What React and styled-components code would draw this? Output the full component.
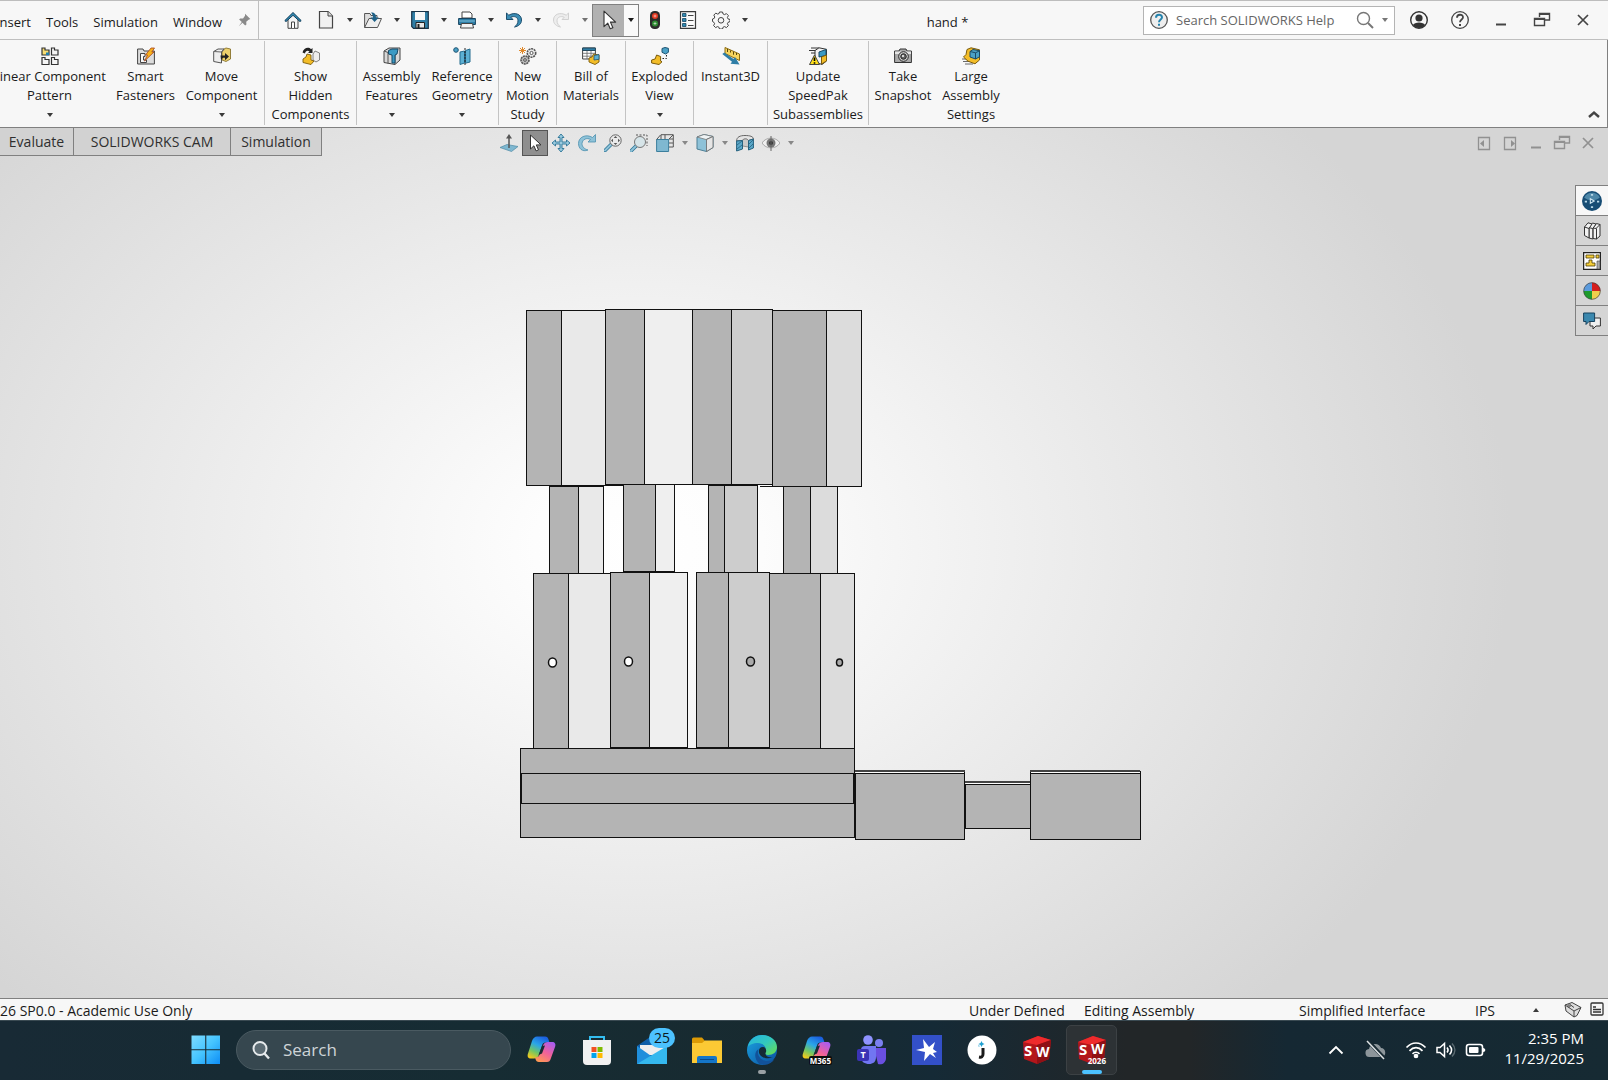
import { useState } from "react"
import styled, { createGlobalStyle } from "styled-components"

const ribbonGroups = [
    [
        { lines: ["Linear Component", "Pattern"], icon: "pattern", width: 115, menu: true },
        { lines: ["Smart", "Fasteners"], icon: "fasteners", width: 77 },
        { lines: ["Move", "Component"], icon: "move", width: 75, menu: true },
    ],
    [{ lines: ["Show", "Hidden", "Components"], icon: "hidden", width: 91 }],
    [
        { lines: ["Assembly", "Features"], icon: "features", width: 69, menu: true },
        { lines: ["Reference", "Geometry"], icon: "geometry", width: 72, menu: true },
    ],
    [{ lines: ["New", "Motion", "Study"], icon: "motion", width: 57 }],
    [{ lines: ["Bill of", "Materials"], icon: "bill", width: 68 }],
    [{ lines: ["Exploded", "View"], icon: "exploded", width: 67, menu: true }],
    [{ lines: ["Instant3D"], icon: "instant", width: 73 }],
    [{ lines: ["Update", "SpeedPak", "Subassemblies"], icon: "speedpak", width: 100 }],
    [
        { lines: ["Take", "Snapshot"], icon: "camera", width: 68 },
        { lines: ["Large", "Assembly", "Settings"], icon: "large", width: 68 },
    ],
]

// every drawing is on an 18 x 18 grid
const icons = {
    pin: <g fill="#8a8a8a"><path d="M9 2l6 6-2 .6-2.6 2.4.2 3.2-1.4 1-3-3L2 16l3.4-4.8-3-2.8 1.2-1.2 3.2.2L9 4.2z" /></g>,
    home: <g><path d="M4 8v9.300h10V8L9 3z" fill="#f4f4f4" stroke="#444" /><path d="M7.500 17v-6h3v6" fill="#fff" stroke="#444" /><path d="M.8 9.600L9 1.500l8.200 8.100-1.200 1L9 4.300l-7 6.300z" fill="#2f8bb3" stroke="#143d5a" /></g>,
    doc: <g><path d="M2.500.500h8.500l4.500 4.500v12h-13z" fill="#f1f1f1" stroke="#444" strokeWidth="1.200" /><path d="M11 .500V5h4.500" fill="#ddd" stroke="#444" /></g>,
    open: <g><path d="M.600 16.500V2.500H6l1 2h6v3" fill="#ddd" stroke="#555" /><path d="M.600 16.500L5 7.500h12.500L13.500 16.500z" fill="#eee" stroke="#555" /><path d="M7 1.500c4 0 5 2 5 5h2.800L10.600 11 6.500 6.500H9c0-2-.5-3-2-5z" fill="#1f6288" /></g>,
    save: <g><path d="M.700.700h16.600v16.600H2.500L.700 15.500z" fill="#2f7ea6" stroke="#1b3448" strokeWidth="1.200" /><path d="M4 1h10v8H4z" fill="#f7f7f7" /><path d="M5 11.500h8.500V17H5z" fill="#e8e8e8" stroke="#222" /><path d="M6.500 13h2v4h-2z" fill="#222" /></g>,
    print: <g><path d="M4 7V1h8l2 2v4z" fill="#fff" stroke="#444" /><path d="M.600 7.500h16.800v6H.600z" fill="#2f7ea6" stroke="#174460" /><path d="M1 10h16" stroke="#7ec0dc" /><path d="M3.500 12.500h11l1 4.500h-13z" fill="#f4f4f4" stroke="#444" /></g>,
    undo: <path d="M1.500 2v6.500H8L5.800 6.300C9 4.600 13 6 13 9.800c0 2.700-1.500 4.500-3.500 6.200 4-.8 7-3 7-7C16.500 3 9.500.800 3.800 4.200z" fill="#3b8db5" stroke="#1d4e6d" strokeLinejoin="round" />,
    redo: <path d="M16.500 2v6.500H10l2.200-2.200C9 4.600 5 6 5 9.800c0 2.700 1.500 4.500 3.500 6.200-4-.8-7-3-7-7C1.500 3 8.500.800 14.200 4.200z" fill="#e9e9e9" stroke="#c2c2c2" strokeLinejoin="round" />,
    cursor: <path d="M4.500 1v14l3.400-3.200 2.200 5.100 2.400-1-2.200-5H15z" fill="#fff" stroke="#333" strokeLinejoin="round" />,
    traffic: <g><rect x="4" y="0" width="10" height="18" rx="4.500" fill="#2b2b2b" /><circle cx="9" cy="5" r="3" fill="#e33a22" /><circle cx="9" cy="12.500" r="3" fill="#2f8d32" /><path d="M9 3.500v3M7.500 5h3M9 11v3M7.500 12.500h3" stroke="#fff" strokeOpacity=".5" /></g>,
    list: <g><path d="M1.500.600h15v16.800h-15z" fill="#fafafa" stroke="#3b3b3b" strokeWidth="1.200" /><path d="M3.500 2.500H7v3H3.500zM3.500 7.500H7v3H3.500zM3.500 12.500H7v3H3.500z" fill="#2f8bb3" stroke="#17425e" strokeWidth=".8" /><path d="M9 4.500h5.500M9 9.500h5.500M9 14.500h5.500" stroke="#444" /></g>,
    gear: <g fill="none" stroke="#444" strokeLinejoin="round"><path d="M7.500 1h3l.6 2 1.400.6 1.900-1 2 2-1 1.900.6 1.400 2 .6v2l-2 .9-.6 1.300 1 1.900-2 2-1.900-1-1.400.6-.6 1.800h-3l-.6-1.800-1.400-.6-1.900 1-2-2 1-1.900L2 11.400l-1.500-.9V8l1.700-.6.600-1.400-1-1.900 2-2 1.900 1 1.400-.6z" /><circle cx="9" cy="9.300" r="2.800" /></g>,

    pattern: <g fill="#f5f5f5" stroke="#333" strokeWidth="1.200"><path d="M1 1h3v2h4v5H1z" fill="#f8de73" /><path d="M5 5.500h3V8H5z" fill="#1f7fb0" stroke="none" /><path d="M10.500 1h3v2h3.500v5h-6.500zM1 10.500h3v2h4v5H1zM10.500 10.500h3v2h3.500v5h-6.500z" /></g>,
    fasteners: <g><path d="M.600 17V2H6l1 2h10.400v13z" fill="#dcdcdc" stroke="#444" /><path d="M3.500 6.500h4.500v3H6.500V13h3v2.500h-6z" fill="#f7f7f7" stroke="#444" /><path d="M14 1h3.500l-2.700 4H17l-9.500 9 3-6H8.500z" fill="#f6b21b" stroke="#a8441d" strokeWidth=".8" /></g>,
    move: <g><path d="M9 3l4-2 4.500 1v10L13 14.500 9 13z" fill="#ecd06c" stroke="#7b641c" strokeWidth=".8" /><path d="M.700 4.500L5 2h6l-2.500 3v11L.700 14.500z" fill="#eee" stroke="#555" /><path d="M.700 4.500L8.500 5M8.500 5L11 2.500" fill="none" stroke="#666" /><path d="M7.500 8.500h4.500V6l4 3.600-4 3.700v-2.500h-2l-2 2z" fill="#222" /></g>,
    hidden: <g><path d="M.500 5.500c1-4.500 6-6 8.500-3.300L10.500 1v5H6l1.500-1.500C5.500 3 3.500 4 3 6.500z" fill="#222" /><path d="M11 7l2-3 4.500 2v7L14 15l-3-2z" fill="#eee" stroke="#666" strokeWidth=".8" /><path d="M1 12l3-2 1-3 4 1v5l3 1-3 3.500-8-2z" fill="#f3bd28" stroke="#7b5b0c" strokeWidth=".9" /></g>,
    features: <g><path d="M1 4l5-3h11v12l-5 4.500-11-2z" fill="#d8d8d8" stroke="#444" /><path d="M1 4l4 1.500v11M12 17V6" fill="none" stroke="#555" /><path d="M5.500 3.500L9 2h6l-1 5-2 1v8H9V8L5.500 7z" fill="#3b9ac4" stroke="#174a68" /></g>,
    geometry: <g><circle cx="3" cy="3" r="2.300" fill="#4ba1c6" stroke="#1e5473" /><path d="M7 5l4.500-1v12L7 17.500zM12.500 3.500L17 2v13l-4.500 1.200z" fill="#5cb0d3" stroke="#256c8f" /><path d="M12 1v17" stroke="#222" strokeDasharray="2 1" /></g>,
    motion: <g><path d="M3.500 0v7M0 3.500h7M1 1l5 5M6 1L1 6" stroke="#e0892b" /><circle cx="12.500" cy="6" r="4.200" fill="#eee" stroke="#555" strokeWidth="1.600" strokeDasharray="2 .7" /><circle cx="12.500" cy="6" r="1.600" fill="#fff" stroke="#555" /><circle cx="6" cy="13" r="4" fill="#bbb" stroke="#555" strokeWidth="1.600" strokeDasharray="2 .7" /><circle cx="6" cy="13" r="1.300" fill="#fff" stroke="#444" /></g>,
    bill: <g><path d="M.600 1h12.800v11H.600z" fill="#fff" stroke="#444" /><path d="M.600 1h12.800v2.500H.600z" fill="#2f7ea6" stroke="#264a5e" /><path d="M1 6.300h12M1 9.200h12M5 4v8M9 4v8" stroke="#666" strokeWidth=".8" /><path d="M7 11l3-1 1.500-3 5.500 1v7l-4 2.500-6-2.500z" fill="#f3bd28" stroke="#7b5b0c" strokeWidth=".9" /><path d="M12 8.500L17 7.500v4.800l-5 .7z" fill="#5cb0d3" stroke="#1e5473" strokeWidth=".8" /></g>,
    exploded: <g><path d="M11 1.500l3-1 3.400.8v4L14.500 7 11 5.300z" fill="#4ba1c6" stroke="#1e5473" /><path d="M15.500 8v3.500h-5" fill="none" stroke="#222" strokeDasharray="1.500 1.500" /><path d="M.600 13l3.500-1 1.500-4 4 1.500V14l1.400.8L8 17.500.600 16z" fill="#f3bd28" stroke="#7b5b0c" /></g>,
    instant: <g><path d="M3 .500L17.500 7v6.500L3 6.500z" fill="#f6d55f" stroke="#8a6a10" /><path d="M5.500 2v3M8.500 3.500v2M11.500 4.700v3M14.500 6v2" stroke="#5a4608" /><path d="M.300 7l2-1.500 9.200 6.500 1.500-2 4.500 7.500-9-.7 1.500-2z" fill="#2f7ea6" /></g>,
    speedpak: <g><path d="M2 1h8M0 3.500h7M2 6h4" stroke="#333" /><path d="M6 3.500L10 .800l7.500 1.500V14L13 17.500 6 15z" fill="#f2f2f2" stroke="#333" /><path d="M10 5l7-2.500v6L10 10z" fill="#3b9ac4" stroke="#1b4b66" /><path d="M12.500 10l5-2v6L12.500 17z" fill="#f3bd28" stroke="#7b5b0c" /><path d="M5.500 8l5 9.500H.500z" fill="#ffe01b" stroke="#444" /><path d="M5.500 10.500v3.500M5.500 15.200v1.500" stroke="#000" strokeWidth="1.600" /></g>,
    camera: <g><path d="M.600 4H5l1-2h6l1 2h4.400v11.500H.600z" fill="#aaa" stroke="#333" /><path d="M1 4.500h16V7H1z" fill="#e5e5e5" /><circle cx="9.500" cy="9.500" r="4.800" fill="#ddd" stroke="#222" /><circle cx="9.500" cy="9.500" r="2.800" fill="#666" stroke="#222" /><circle cx="9" cy="9" r="1" fill="#fff" /></g>,
    large: <g><path d="M0 12h6M1 14.500h7M3 17h8" stroke="#444" strokeWidth=".8" /><path d="M1.500 10L4 7.500l1-5L9 .800l8.500 2V13L13 16.800l-7-2.600z" fill="#f3bd28" stroke="#7b5b0c" /><path d="M8 4.500L11 2.500l6.500 1.300v6L13.500 12 8 10z" fill="#4ba1c6" stroke="#1b4b66" /><path d="M8 4.500l5.500 1.300V12M13.500 5.800l4-2" fill="none" stroke="#1b4b66" /></g>,

    normal: <g><path d="M0 13.500l7-3 11 2-6.500 5z" fill="#7fb8d1" stroke="#4d8aa5" strokeWidth=".7" /><path d="M9 14V2" stroke="#555" strokeWidth="1.500" /><path d="M9 0l3 4.500H6z" fill="#555" /></g>,
    pan: <path d="M9 0l3 3.500h-2v4.500h4.500V6L18 9l-3.500 3v-2H10v4.500h2L9 18l-3-3.500h2V10H3.500v2L0 9l3.500-3v2H8V3.500H6z" fill="#9bcbdf" stroke="#2b7496" strokeWidth=".9" />,
    rotate: <path d="M17.500.500v7.500h-7.500l2.500-2.500C9 3.500 4.500 5 4 9.500c0 3.500 2.500 5.500 6 6.500C4 18.500.500 14 .500 9.500.500 3 8-.500 14.500 3.500z" fill="#8ec2d8" stroke="#4c90ae" strokeWidth=".8" />,
    zoomFit: <g><path d="M1 16.500l6-6" stroke="#2b7496" strokeWidth="3.500" strokeLinecap="round" /><path d="M1 16.500l6-6" stroke="#8ec2d8" strokeWidth="2" strokeLinecap="round" /><circle cx="11.500" cy="6.500" r="5.700" fill="#eaeaea" stroke="#666" /><path d="M11.500 2l1.800 2h-3.600zM11.500 11l1.800-2h-3.600zM7 6.500l2-1.800v3.600zM16 6.500l-2-1.800v3.600z" fill="#555" /></g>,
    zoomArea: <g><path d="M6 1h11v11" fill="none" stroke="#555" strokeDasharray="2 1.500" /><path d="M1 17l5-5" stroke="#2b7496" strokeWidth="3.500" strokeLinecap="round" /><path d="M1 17l5-5" stroke="#8ec2d8" strokeWidth="2" strokeLinecap="round" /><circle cx="10" cy="8" r="5.500" fill="#d6e4e8" stroke="#777" /></g>,
    orient: <g><path d="M5 5V.700h12.300V13H13M17 1l-4.500 4.500M9 .700v4.500M13 5h4M17 9h-4" fill="none" stroke="#555" /><path d="M.600 5.500h12v12H.600z" fill="#7fb8d1" stroke="#3c7f9d" /><path d="M.600 5.500L4.500 1" stroke="#555" /></g>,
    display: <g><path d="M1 3l7-2.500 9 2v11L10.500 17.500 1 15z" fill="#8ec2d8" stroke="#4d7f95" /><path d="M1 3l9 2.500 7-3-9-2z" fill="#eef3f5" stroke="#777" strokeWidth=".8" /><path d="M10.500 5.500l6.500-3v11l-6.500 4z" fill="#e6e6e6" stroke="#666" strokeWidth=".8" /></g>,
    section: <g><path d="M.600 7C.600 3 4 1.500 9 1.500s8.400 1 8.400 3.500l-4.900 1.500c-1-2-5-2-6.500 0z" fill="#e4e4e4" stroke="#666" /><path d="M6.500 6.500c1.500-2 4.500-2 6 0V13l-6-1z" fill="#c9c9c9" stroke="#777" strokeWidth=".7" /><path d="M.600 7l5.900-.5V15L.600 17zM12.500 6.500l4.900-1.500v9l-4.900 2z" fill="#5ba8c9" stroke="#24607e" /><path d="M1 11l5-4M1 15l5-4M13 10l4-4M13 14l4-4" stroke="#24607e" strokeWidth=".8" /></g>,
    eye: <g><path d="M0 9c4-6.500 14-6.500 18 0-4 6.500-14 6.500-18 0z" fill="#f0f0f0" stroke="#999" strokeWidth=".8" /><circle cx="9" cy="9" r="4.500" fill="#777" /><circle cx="9" cy="9" r="2" fill="#333" /><path d="M9 2v15" stroke="#666" /></g>,

    minimize: <path d="M4 13.500h10" stroke="currentColor" strokeWidth="2" />,
    restore: <g fill="none" stroke="currentColor" strokeWidth="1.400"><path d="M6.500 6V2.500h10V9H12" /><path d="M6.500 3h10M1.500 8h10" strokeWidth="2" /><path d="M1.500 7.500h10v7h-10z" /></g>,
    close: <path d="M4 4l10 10M14 4L4 14" stroke="currentColor" strokeWidth="1.700" />,
    paneLeft: <g><path d="M3.500 3.500h11v12h-11z" fill="none" stroke="currentColor" strokeWidth="1.300" /><path d="M9 6v7L5 9.500z" fill="currentColor" /></g>,
    paneRight: <g><path d="M3.500 3.500h11v12h-11z" fill="none" stroke="currentColor" strokeWidth="1.300" /><path d="M10 6v7l4-3.500z" fill="currentColor" /></g>,
    user: <g><circle cx="9" cy="9" r="8.300" fill="#f7f7f7" stroke="#333" strokeWidth="1.400" /><circle cx="9" cy="7" r="3.600" fill="#333" /><path d="M3 14c1-3.500 11-3.500 12 0-3 4-9 4-12 0z" fill="#333" /></g>,
    help: <g><circle cx="9" cy="9" r="8.300" fill="none" stroke="#444" strokeWidth="1.300" /><path d="M6 6.800c0-4 6-4 6-.5 0 2.200-3 2.200-3 5" fill="none" stroke="#444" strokeWidth="1.800" /><path d="M8 13h2v2H8z" fill="#444" /></g>,
    helpBlue: <g><circle cx="9" cy="9" r="8.300" fill="#eee" stroke="#555" strokeWidth="1.300" /><path d="M6 6.800c0-4 6-4 6-.5 0 2.200-3 2.200-3 5" fill="none" stroke="#2583ad" strokeWidth="2" /><path d="M8 12.800h2v2H8z" fill="#2583ad" /></g>,
    search: <g fill="none" stroke="#777" strokeWidth="1.400"><circle cx="7.500" cy="7.500" r="6" /><path d="M12 12l5 5" strokeWidth="2" /></g>,
    collapse: <path d="M4 12l5-4.500 5 4.500" fill="none" stroke="#444" strokeWidth="2.400" />,

    ball: <g><circle cx="9" cy="9" r="9" fill="#164c74" /><path d="M2 6C4 0 14 0 16 6c-4 3-10 3-14 0z" fill="#4d87a8" /><path d="M7.500 7l3.500 2-3.500 2z" fill="none" stroke="#cde4f0" /><path d="M2.500 9.500h2M13.500 9.500h2M8 14.500h2M8 3.500h2" stroke="#b6d6e6" strokeWidth="1.500" /></g>,
    books: <g fill="#f2f2f2" stroke="#333" strokeLinejoin="round"><path d="M10 6l3.500-4.500 3.500 1V14l-3.500 3-3.500-.5z" /><path d="M13.500 6L17 2.500M10 6l3.500.5V17" fill="none" /><path d="M6 5.500L9.500 1l3.500 1L9.800 6.500V17L6 16z" /><path d="M1.500 5L5 .800l4 1.200L6 6.500V16l-4.500-2.500z" /><path d="M1.500 5L6 6.500M6 5.700l3.800.8" fill="none" /></g>,
    palette: <g><path d="M.600.600h16.800v16.800H.600z" fill="#fff" stroke="#222" strokeWidth="1.300" /><path d="M3 3h8v3H3zM13 3h3v3h-3zM6 8h3v3h3v3H3v-3h3z" fill="#f6cf3a" stroke="#4a3a05" strokeWidth=".8" /><path d="M14 9h3v8h-3z" fill="#aaa" stroke="#444" strokeWidth=".6" /></g>,
    colors: <g><path d="M9 9V.500A8.500 8.500 0 0 0 .500 9z" fill="#5b9bdd" /><path d="M9 9V.500A8.500 8.500 0 0 1 17.500 9z" fill="#d51f1f" /><path d="M9 9H.500A8.500 8.500 0 0 0 9 17.500z" fill="#1e9a2c" /><path d="M9 9h8.500A8.500 8.500 0 0 1 9 17.500z" fill="#f0cf4c" /><circle cx="9" cy="9" r="8.300" fill="none" stroke="#444" strokeOpacity=".7" /></g>,
    chat: <g><path d="M7 6h10.400v8H13l-3 3v-3H7z" fill="#f0f0f0" stroke="#333" /><path d="M.600 1h11v8.500H6l-3 3v-3H.600z" fill="#3b88ae" stroke="#17425e" /></g>,
    tags: <g><path d="M1 4l7-2.500 9 5-4 8-3 1.500-8-6z" fill="#ddd" stroke="#444" /><path d="M1 4l9 6 7-3.500M10 10v6M6 3.500l4 3" fill="none" stroke="#444" /><circle cx="5" cy="5" r="1.200" fill="#fff" stroke="#444" /></g>,
    note: <g fill="none" stroke="#333" strokeWidth="1.300"><rect x="3" y="2" width="12" height="12" rx="1" /><path d="M5 6h3M5 8.500h8M5 11h8" /></g>,
}

const copilotBody = (
    <g>
        <path d="M10 1.500h8c2 0 3 1 3.500 3l1 3h-4c-2 0-3 1-3.500 3l-3 9c-1 3-3 4-5 4H4c-3 0-4-2-3-5L5 6c1-3 3-4.500 5-4.500z" fill="url(#copilotCool)" />
        <path d="M20 27h-8c-2 0-3-1-3.500-3l-.500-1.500c2.500 0 4-1 5-4l3-8c1-3 3-3.500 5-3.500h4c3 0 4 2 3 5l-4 11c-1 3-2 4-4 4z" fill="url(#copilotWarm)" />
        <path d="M15 11l3-.500-3 8-3.500 1.500z" fill="#1b2b34" />
    </g>
)

const cube = (
    <g>
        <path d="M1 7L16 1l13 4-2 19-12 5L2 24z" fill="#b3161b" />
        <path d="M1 7L16 1l13 4-14 5z" fill="#ee2a2c" />
        <path d="M15 10l14-5-2 19-12 5z" fill="#8f1015" />
    </g>
)

// taskbar pictures are on a 30 x 30 grid
const apps = [
    { name: "Copilot", art: copilotBody },
    {
        name: "Microsoft Store",
        art: <g><path d="M8 7V2h14v5" fill="none" stroke="#33bdf0" strokeWidth="2" /><path d="M1 5h28v21a4 4 0 0 1-4 4H5a4 4 0 0 1-4-4z" fill="#f1f1f1" /><path d="M9.500 12h5v5h-5z" fill="#f25022" /><path d="M15.500 12h5v5h-5z" fill="#7fba00" /><path d="M9.500 18h5v5h-5z" fill="#00a4ef" /><path d="M15.500 18h5v5h-5z" fill="#ffb900" /></g>,
    },
    {
        name: "Mail",
        badge: "25",
        art: <g><path d="M0 11L13 2l17 9v18H0z" fill="#0f5ea8" /><path d="M3 10h24v10H3z" fill="#eee" /><path d="M0 11l17 12L0 29z" fill="#1f8fdc" /><path d="M30 11L0 29h30z" fill="#35b8ee" /></g>,
    },
    {
        name: "File Explorer",
        art: <g><path d="M0 4a1.500 1.500 0 0 1 1.500-1.500H10L13 6v6H0z" fill="#dc9a05" /><path d="M0 8h10l3-2.500h17V28H0z" fill="#fcc934" /><path d="M5 28v-5a2 2 0 0 1 2-2h16a2 2 0 0 1 2 2v5z" fill="#1576c8" /><path d="M8 24.500h14" stroke="#0a4a8a" /></g>,
    },
    {
        name: "Edge",
        running: true,
        art: <g><circle cx="15" cy="15" r="15" fill="url(#edgeBlue)" /><path d="M1 12C2 4 9 0 15 0c9 0 15 6 15 12 0 5-4 8-9 8-3 0-4-2-2.500-4C20 12 16 8 11 8 6 8 2 10 1 12z" fill="url(#edgeGreen)" /><path d="M11.500 14c-2 6 2 12 9 12 3 0 6-1 7-2-3 5-9 7-15 5-5-4-6-12-1-15z" fill="#12529a" /><path d="M16 12c-4 0-5 4-3.500 7 2 4 8 5.500 13.500 3-4 1-8-1-7.500-4 1.500-2 .5-6-2.500-6z" fill="#152a35" /></g>,
    },
    { name: "Microsoft 365 Copilot", tag: "M365", art: copilotBody },
    {
        name: "Teams",
        art: <g><circle cx="22" cy="8" r="4" fill="#7b7ff0" /><path d="M17 13h12v10a6 6 0 0 1-8 6z" fill="#6a4fe0" /><circle cx="11" cy="5" r="4.800" fill="#8f93ff" /><path d="M4 15a4 4 0 0 1 4-4h11v11c0 5-3 7-7 7s-8-2-8-7z" fill="#7176f2" /><rect x="0" y="14" width="12" height="12" rx="2" fill="#3a33b5" /><text x="6" y="23" textAnchor="middle" fontSize="9" fontWeight="700" fill="#fff">T</text></g>,
    },
    {
        name: "Pointer",
        art: <g><path d="M0 0h30v30H0z" fill="#3350c8" /><path d="M11 4l6 8 6-5-2 7 4 3-4 1 3 5-6-4-6 7 1-9-9-2 8-2z" fill="#fff" /></g>,
    },
    {
        name: "Notes",
        art: <g><circle cx="15" cy="15" r="14.500" fill="#fff" /><path d="M14.500 6l1 2 2 1-2 1-1 2-1-2-2-1 2-1zM11 9l.700 1.500L13 11l-1.300.700" fill="#1f9fd0" /><path d="M16 13v6c0 3-1.500 3.500-4 3" fill="none" stroke="#1b1b1b" strokeWidth="3" /></g>,
    },
    {
        name: "SOLIDWORKS",
        art: <g>{cube}<text x="2" y="21" fontSize="15" fontWeight="700" fill="#fff">S</text><text x="14" y="22" fontSize="14" fontWeight="700" fill="#fff">W</text></g>,
    },
    {
        name: "SOLIDWORKS 2026",
        active: true,
        tag: "2026",
        plain: true,
        art: <g>{cube}<text x="2" y="20" fontSize="15" fontWeight="700" fill="#fff">S</text><text x="14" y="19" fontSize="14" fontWeight="700" fill="#fff">W</text></g>,
    },
]

// x, y, width, height, shade
const fingers = [
    [549, 486, 29, 87, "#b4b4b4"], [578, 486, 25, 87, "#e9e9e9"],
    [623, 484, 32, 87, "#b4b4b4"], [655, 484, 19, 87, "#efefef"],
    [708, 485, 16, 87, "#b4b4b4"], [724, 485, 33, 87, "#cdcdcd"],
    [783, 486, 27, 87, "#b4b4b4"], [810, 486, 27, 87, "#dcdcdc"],
    [526, 310, 35, 175, "#b4b4b4"], [561, 310, 44, 175, "#e9e9e9"],
    [772, 310, 54, 176, "#b4b4b4"], [826, 310, 35, 176, "#dcdcdc"],
    [605, 309, 39, 175, "#b4b4b4"], [644, 309, 48, 175, "#efefef"],
    [692, 309, 39, 175, "#b4b4b4"], [731, 309, 41, 175, "#cdcdcd"],
    [533, 573, 35, 175, "#b4b4b4"], [568, 573, 42, 175, "#e9e9e9"],
    [769, 573, 51, 175, "#b4b4b4"], [820, 573, 34, 175, "#dcdcdc"],
    [610, 572, 39, 175, "#b4b4b4"], [649, 572, 38, 175, "#efefef"],
    [696, 572, 32, 175, "#b4b4b4"], [728, 572, 41, 175, "#cdcdcd"],
]

const palm = [
    [520, 748, 334, 89, "#b4b4b4"],
    [521, 773, 332, 30, "#b4b4b4"],
    [855, 773, 109, 66, "#b4b4b4"],
    [965, 784, 65, 44, "#b4b4b4"],
    [1030, 773, 110, 66, "#b4b4b4"],
]

const holes = [
    [552, 662, 4, "#fff"],
    [628, 661, 4, "#fff"],
    [750, 661, 4, "#aaa"],
    [839, 662, 3, "#aaa"],
]

function Icon({ name, size = 18 }) {
    return <svg width={size} height={size} viewBox="0 0 18 18" fill="none" aria-hidden="true">{icons[name]}</svg>
}

function Caret({ up }) {
    return (
        <svg width="6" height="4" viewBox="0 0 6 4" aria-hidden="true">
            <path d={up ? "M0 4h6L3 0z" : "M0 0h6L3 4z"} fill="currentColor" />
        </svg>
    )
}

function SplitTool({ icon, label }) {
    return (
        <Split>
            <IconButton aria-label={label}><Icon name={icon} /></IconButton>
            <CaretButton aria-label={label + " options"}><Caret /></CaretButton>
        </Split>
    )
}

function TitleBar() {
    const [query, setQuery] = useState("")

    return (
        <TitleRow>
            <MenuBar>
                <MenuButton>Insert</MenuButton>
                <MenuButton>Tools</MenuButton>
                <MenuButton>Simulation</MenuButton>
                <MenuButton>Window</MenuButton>
                <IconButton aria-label="Pin menu"><Icon name="pin" size={16} /></IconButton>
            </MenuBar>
            <QuickTools>
                <HomeButton aria-label="Home"><Icon name="home" /></HomeButton>
                <SplitTool icon="doc" label="New" />
                <SplitTool icon="open" label="Open" />
                <SplitTool icon="save" label="Save" />
                <SplitTool icon="print" label="Print" />
                <SplitTool icon="undo" label="Undo" />
                <Faded><SplitTool icon="redo" label="Redo" /></Faded>
                <SelectTool>
                    <SelectButton aria-label="Select"><Icon name="cursor" size={20} /></SelectButton>
                    <SelectCaret aria-label="Select options"><Caret /></SelectCaret>
                </SelectTool>
            </QuickTools>
            <SideTools>
                <IconButton aria-label="Rebuild"><Icon name="traffic" /></IconButton>
                <IconButton aria-label="File properties"><Icon name="list" /></IconButton>
                <SplitTool icon="gear" label="Options" />
            </SideTools>
            <DocumentName>hand *</DocumentName>
            <HelpSearch>
                <Icon name="helpBlue" />
                <HelpInput aria-label="Search help" placeholder="Search SOLIDWORKS Help" value={query} onChange={e => setQuery(e.target.value)} />
                <Icon name="search" />
                <Caret />
            </HelpSearch>
            <WindowButtons>
                <WindowButton aria-label="Account"><Icon name="user" /></WindowButton>
                <WindowButton aria-label="Help"><Icon name="help" /></WindowButton>
                <WindowButton aria-label="Minimize"><Icon name="minimize" /></WindowButton>
                <WindowButton aria-label="Restore"><Icon name="restore" /></WindowButton>
                <WindowButton aria-label="Close"><Icon name="close" /></WindowButton>
            </WindowButtons>
        </TitleRow>
    )
}

function Ribbon() {
    return (
        <RibbonRow>
            {ribbonGroups.map((group, index) => (
                <RibbonGroup key={index}>
                    {group.map(item => (
                        <RibbonButton key={item.icon} $width={item.width}>
                            <Icon name={item.icon} />
                            <RibbonText>
                                {item.lines.map(line => <RibbonLine key={line}>{line}</RibbonLine>)}
                            </RibbonText>
                            {item.menu && <RibbonCaret><Caret /></RibbonCaret>}
                        </RibbonButton>
                    ))}
                </RibbonGroup>
            ))}
            <CollapseButton aria-label="Collapse ribbon"><Icon name="collapse" /></CollapseButton>
        </RibbonRow>
    )
}

function Model() {
    return (
        <ModelDrawing viewBox="0 128 1608 870" preserveAspectRatio="xMidYMid meet" aria-label="Hand assembly" role="img">
            <g stroke="#111" shapeRendering="crispEdges">
                {fingers.map(([x, y, w, h, fill]) => <rect key={x + "-" + y} x={x + 0.5} y={y + 0.5} width={w} height={h} fill={fill} />)}
                {palm.map(([x, y, w, h, fill]) => <rect key={x + "-" + y} x={x + 0.5} y={y + 0.5} width={w} height={h} fill={fill} />)}
                <path d="M603 485.500h21M760 486.500h13M964.500 770v4M1030.500 770v4M1140.500 771v3M854.500 748v90" fill="none" />
                <path d="M855 771h110M965 782h65M1030 771h110" stroke="#444" strokeWidth="2" />
                <path d="M856 772.500h108M966 783.500h64M1031 772.500h109" stroke="#fff" />
            </g>
            {holes.map(([x, y, r, fill]) => <ellipse key={x} cx={x + 0.5} cy={y + 0.5} rx={r} ry={r + 0.5} fill={fill} stroke="#111" strokeWidth="1.500" />)}
        </ModelDrawing>
    )
}

function Viewport() {
    return (
        <Canvas>
            <Model />
            <CanvasBar>
                <Tabs>
                    <Tab $width={82}>Evaluate</Tab>
                    <Tab $width={157}>SOLIDWORKS CAM</Tab>
                    <Tab $width={91}>Simulation</Tab>
                </Tabs>
                <ViewTools>
                    <ViewButton aria-label="Normal to"><Icon name="normal" /></ViewButton>
                    <ViewButton aria-label="Select" $pressed><Icon name="cursor" /></ViewButton>
                    <ViewButton aria-label="Pan"><Icon name="pan" /></ViewButton>
                    <ViewButton aria-label="Rotate"><Icon name="rotate" /></ViewButton>
                    <ViewButton aria-label="Zoom to fit"><Icon name="zoomFit" /></ViewButton>
                    <ViewButton aria-label="Zoom to area"><Icon name="zoomArea" /></ViewButton>
                    <ViewButton aria-label="View orientation"><Icon name="orient" /></ViewButton>
                    <ViewCaret aria-label="View orientation options"><Caret /></ViewCaret>
                    <ViewButton aria-label="Display style"><Icon name="display" /></ViewButton>
                    <ViewCaret aria-label="Display style options"><Caret /></ViewCaret>
                    <ViewButton aria-label="Section view"><Icon name="section" /></ViewButton>
                    <ViewButton aria-label="Hide or show items"><Icon name="eye" /></ViewButton>
                    <ViewCaret aria-label="Hide or show options"><Caret /></ViewCaret>
                </ViewTools>
                <PaneButtons>
                    <ViewButton aria-label="Previous pane"><Icon name="paneLeft" /></ViewButton>
                    <ViewButton aria-label="Next pane"><Icon name="paneRight" /></ViewButton>
                    <ViewButton aria-label="Minimize document"><Icon name="minimize" /></ViewButton>
                    <ViewButton aria-label="Restore document"><Icon name="restore" /></ViewButton>
                    <ViewButton aria-label="Close document"><Icon name="close" /></ViewButton>
                </PaneButtons>
            </CanvasBar>
            <TaskPane>
                <PaneTab aria-label="Resources" $open><Icon name="ball" size={20} /></PaneTab>
                <PaneTab aria-label="Design library"><Icon name="books" /></PaneTab>
                <PaneTab aria-label="View palette"><Icon name="palette" /></PaneTab>
                <PaneTab aria-label="Appearances"><Icon name="colors" /></PaneTab>
                <PaneTab aria-label="Forum"><Icon name="chat" /></PaneTab>
            </TaskPane>
        </Canvas>
    )
}

function StatusBar() {
    return (
        <StatusRow>
            <StatusProduct>26 SP0.0 - Academic Use Only</StatusProduct>
            <StatusField $width={115}>Under Defined</StatusField>
            <StatusField $width={215}>Editing Assembly</StatusField>
            <StatusField $width={176}>Simplified Interface</StatusField>
            <StatusField $width={53}>IPS</StatusField>
            <StatusIcons>
                <CaretButton aria-label="Unit system"><Caret up /></CaretButton>
                <StatusButtons>
                    <IconButton aria-label="Tags"><Icon name="tags" /></IconButton>
                    <IconButton aria-label="Notes"><Icon name="note" /></IconButton>
                </StatusButtons>
            </StatusIcons>
        </StatusRow>
    )
}

function Taskbar() {
    const [search, setSearch] = useState("")

    return (
        <TaskbarRow>
            <StartButton aria-label="Start">
                <svg width="30" height="30" viewBox="0 0 30 30">
                    <path d="M.500.500h13.700v13.700H.500zM15.300.500H29v13.700H15.300zM.500 15.300h13.700V29H.500zM15.300 15.300H29V29H15.300z" fill="url(#winBlue)" />
                </svg>
            </StartButton>
            <TaskSearch>
                <svg width="20" height="20" viewBox="0 0 20 20" fill="none" stroke="#e6eaec" strokeWidth="2">
                    <circle cx="9" cy="8.500" r="6.500" fill="#5b6b73" />
                    <path d="M13.500 13.500L18 18.500" strokeWidth="2.400" />
                </svg>
                <TaskInput aria-label="Search Windows" placeholder="Search" value={search} onChange={e => setSearch(e.target.value)} />
            </TaskSearch>
            {apps.map(app => (
                <AppButton key={app.name} aria-label={app.name} $active={app.active}>
                    <svg width="30" height="30" viewBox="0 0 30 30">{app.art}</svg>
                    {app.badge && <Badge>{app.badge}</Badge>}
                    {app.tag && <AppTag $plain={app.plain}>{app.tag}</AppTag>}
                    {(app.running || app.active) && <Indicator $active={app.active} />}
                </AppButton>
            ))}
            <Tray>
                <TrayButton $width={40} aria-label="Hidden icons">
                    <svg width="16" height="10" viewBox="0 0 16 10" fill="none" stroke="#fff" strokeWidth="1.800"><path d="M1.500 8.500L8 2l6.500 6.500" /></svg>
                </TrayButton>
                <TrayButton $width={40} aria-label="OneDrive">
                    <svg width="22" height="20" viewBox="0 0 22 20"><path d="M5 17a4 4 0 0 1-1-8c1-6 10-7 12-1 5 0 6 8 1 9z" fill="#8d969b" /><path d="M3 1l16 17" stroke="#182a33" strokeWidth="4" /><path d="M2 1l17 18" stroke="#dfe3e5" strokeWidth="1.500" /></svg>
                </TrayButton>
                <TrayGroup>
                    <TrayButton $width={30} aria-label="Network">
                        <svg width="22" height="18" viewBox="0 0 22 18" fill="none" stroke="#fff" strokeWidth="1.700"><path d="M1.500 6.500c5.500-6 13.500-6 19 0M4.500 9.800c4-4.200 9-4.200 13 0M7.500 12.800c2-2 5-2 7 0" /><circle cx="11" cy="15" r="1.500" fill="#fff" /></svg>
                    </TrayButton>
                    <TrayButton $width={30} aria-label="Volume">
                        <svg width="22" height="18" viewBox="0 0 22 18" fill="none" stroke="#fff" strokeWidth="1.500"><path d="M2 6.500h3L9.500 2.500v13L5 11.500H2z" /><path d="M12 6.500c1.300 1.500 1.300 3.500 0 5M14.500 4.500c2.500 2.700 2.500 6.300 0 9" /><path d="M17 2.500c3.800 4 3.800 9 0 13" stroke="#5b6a71" /></svg>
                    </TrayButton>
                    <TrayButton $width={30} aria-label="Battery">
                        <svg width="22" height="18" viewBox="0 0 22 18"><rect x="1.500" y="3.500" width="16" height="11" rx="2.500" fill="none" stroke="#fff" strokeWidth="1.600" /><rect x="4" y="6" width="9.500" height="6" rx="1" fill="#fff" /><path d="M18 7c3 0 3 4 0 4z" fill="#fff" /></svg>
                    </TrayButton>
                </TrayGroup>
                <Clock>
                    <span>2:35 PM</span>
                    <span>11/29/2025</span>
                </Clock>
            </Tray>
        </TaskbarRow>
    )
}

function Gradients() {
    return (
        <HiddenSvg aria-hidden="true">
            <defs>
                <linearGradient id="winBlue" x1="0" y1="0" x2="1" y2="1"><stop offset="0" stopColor="#7fdcff" /><stop offset=".5" stopColor="#45c4ff" /><stop offset="1" stopColor="#0d8df5" /></linearGradient>
                <linearGradient id="copilotCool" x1=".7" y1="0" x2=".2" y2="1"><stop offset="0" stopColor="#1b5fe0" /><stop offset=".4" stopColor="#2aa6e8" /><stop offset=".7" stopColor="#6fc665" /><stop offset="1" stopColor="#f3c91b" /></linearGradient>
                <linearGradient id="copilotWarm" x1=".8" y1="0" x2=".2" y2="1"><stop offset="0" stopColor="#a95cf0" /><stop offset=".5" stopColor="#f0619b" /><stop offset="1" stopColor="#ff9a52" /></linearGradient>
                <linearGradient id="edgeBlue" x1="0" y1="0" x2="1" y2="1"><stop offset="0" stopColor="#1ba4e2" /><stop offset="1" stopColor="#0b4f9e" /></linearGradient>
                <linearGradient id="edgeGreen" x1="0" y1="0" x2="1" y2="1"><stop offset="0" stopColor="#25b3e3" /><stop offset=".5" stopColor="#33c8bd" /><stop offset="1" stopColor="#6ce04a" /></linearGradient>
            </defs>
        </HiddenSvg>
    )
}

function App() {
    return (
        <Screen>
            <GlobalStyle />
            <Gradients />
            <AppWindow>
                <TitleBar />
                <Ribbon />
                <Viewport />
                <StatusBar />
            </AppWindow>
            <Taskbar />
        </Screen>
    )
}

export default App

const GlobalStyle = createGlobalStyle`
    * {
        box-sizing: border-box;
    }

    body {
        margin: 0;
        overflow: hidden;
        font-family: "Open Sans", "Noto Sans", sans-serif;
        font-size: 13px;
        color: #1a1a1a;
    }

    button, input {
        font: inherit;
        color: inherit;
        border: 0;
        padding: 0;
        background: none;
    }

    svg {
        flex-shrink: 0;
    }
`

const Screen = styled.div`
    display: flex;
    flex-direction: column;
    height: 100vh;
    overflow: hidden;
`

const HiddenSvg = styled.svg`
    position: absolute;
    width: 0;
    height: 0;
`

/* the window hangs a little over the left edge of the screen */
const AppWindow = styled.div`
    display: flex;
    flex-direction: column;
    flex: 1;
    min-height: 0;
    margin-left: -8px;
    background-color: #f7f7f7;
`

const TitleRow = styled.header`
    display: flex;
    align-items: center;
    height: 40px;
    padding-right: 5px;
    border-top: 1px solid #bdbdbd;
    border-bottom: 1px solid #bfbfbf;
`

const MenuBar = styled.nav`
    display: flex;
    align-items: center;
    justify-content: flex-end;
    gap: 15px;
    width: 267px;
    height: 38px;
    padding-right: 5px;
    border-right: 1px solid #bfbfbf;
`

const MenuButton = styled.button`
    line-height: 20px;
    padding-top: 3px;
`

const IconButton = styled.button`
    display: flex;
    align-items: center;
    justify-content: center;
`

const QuickTools = styled.div`
    display: flex;
    align-items: center;
    gap: 7px;
    padding-left: 25px;
`

const HomeButton = styled(IconButton)`
    width: 26px;
    justify-content: flex-start;
`

const Split = styled.div`
    display: flex;
    align-items: center;
    gap: 7px;
`

const CaretButton = styled(IconButton)`
    width: 15px;
    height: 18px;
    color: #3a3a3a;
`

const Faded = styled.div`
    opacity: 0.7;
`

const SelectTool = styled.div`
    display: flex;
    height: 33px;
    margin-left: -7px;
    border: 1px solid #808080;
`

const SelectButton = styled(IconButton)`
    width: 31px;
    background-color: #b1b1b1;
`

const SelectCaret = styled(IconButton)`
    width: 14px;
    background-color: #fafafa;
`

const SideTools = styled.div`
    display: flex;
    align-items: center;
    gap: 15px;
    padding-left: 7px;
`

const DocumentName = styled.div`
    flex: 1;
    text-align: center;
    padding-top: 3px;
`

const HelpSearch = styled.div`
    display: flex;
    align-items: center;
    gap: 8px;
    width: 252px;
    height: 29px;
    padding: 0 6px;
    background-color: #fff;
    border: 1px solid #b4b4b4;
    color: #777;
`

const HelpInput = styled.input`
    flex: 1;
    min-width: 0;
    outline: none;

    &::placeholder {
        color: #666;
        opacity: 1;
    }
`

const WindowButtons = styled.div`
    display: flex;
    padding-left: 3px;
`

const WindowButton = styled(IconButton)`
    width: 41px;
    height: 38px;
    color: #444;
`

const RibbonRow = styled.div`
    display: flex;
    height: 88px;
    padding-top: 1px;
    border-bottom: 1px solid #808080;
    border-right: 1px solid #808080;
`

const RibbonGroup = styled.div`
    display: flex;
    height: 84px;
    border-right: 1px solid #c4c4c4;

    &:first-of-type {
        padding-right: 5px;
    }

    &:last-of-type {
        border-right: 0;
    }
`

const RibbonButton = styled.button`
    display: flex;
    flex-direction: column;
    align-items: center;
    width: ${props => props.$width}px;
    padding-top: 6px;
`

const RibbonText = styled.span`
    display: flex;
    flex-direction: column;
    align-items: center;
    padding-top: 2px;
`

const RibbonLine = styled.span`
    line-height: 19px;
    white-space: nowrap;
`

const RibbonCaret = styled.span`
    display: flex;
    align-items: center;
    height: 19px;
    color: #3a3a3a;
`

const CollapseButton = styled(IconButton)`
    align-self: flex-end;
    width: 26px;
    height: 26px;
    margin-left: auto;
`

const Canvas = styled.main`
    position: relative;
    flex: 1;
    min-height: 0;
    background: radial-gradient(ellipse 54% 74% at 40% 48%, #fff 0%, #fdfdfd 12%, #d5d5d5 100%);
`

const ModelDrawing = styled.svg`
    position: absolute;
    top: 0;
    right: 0;
    width: calc(100% - 8px);
    height: 100%;
`

const CanvasBar = styled.div`
    position: relative;
    display: flex;
    align-items: flex-start;
    padding-right: 7px;
`

const Tabs = styled.div`
    display: flex;
    margin-right: 174px;
`

const Tab = styled.button`
    width: ${props => props.$width}px;
    height: 28px;
    padding-left: 8px;
    font-size: 14px;
    color: #2f2f2f;
    background-color: #d2d2d2;
    border-right: 1px solid #808080;
    border-bottom: 1px solid #808080;

    & + & {
        padding-left: 0;
    }
`

const ViewTools = styled.div`
    display: flex;
    padding-top: 2px;
`

const ViewButton = styled(IconButton)`
    width: 26px;
    height: 26px;
    background-color: ${props => props.$pressed ? "#8f8f8f" : "transparent"};
    border: ${props => props.$pressed ? "1px solid #555" : "0"};
`

const ViewCaret = styled(IconButton)`
    width: 14px;
    height: 26px;
    color: #888;
`

const PaneButtons = styled.div`
    display: flex;
    margin-left: auto;
    padding-top: 2px;
    color: #919191;
`

const TaskPane = styled.aside`
    position: absolute;
    top: 57px;
    right: 0;
    display: flex;
    flex-direction: column;
    width: 33px;
    border-left: 1px solid #808080;
    border-bottom: 1px solid #808080;
`

const PaneTab = styled(IconButton)`
    height: 30px;
    border-top: 1px solid #808080;
    background-color: ${props => props.$open ? "#f7f7f7" : "#d5d5d5"};
`

const StatusRow = styled.footer`
    display: flex;
    height: 22px;
    padding: 2px 2px 0 8px;
    overflow: hidden;
    border-top: 1px solid #808080;
    font-size: 14px;
    line-height: 20px;
`

const StatusProduct = styled.div`
    flex: 1;
`

const StatusField = styled.div`
    width: ${props => props.$width}px;
    white-space: nowrap;
`

const StatusIcons = styled.div`
    display: flex;
    align-items: flex-start;
    gap: 21px;
`

const StatusButtons = styled.div`
    display: flex;
    gap: 6px;
`

const TaskbarRow = styled.footer`
    display: flex;
    align-items: center;
    height: 60px;
    padding-left: 178px;
    padding-bottom: 2px;
    color: #fff;
    border-top: 1px solid #3a4a52;
    background: linear-gradient(90deg, #182a35 0%, #162c33 30%, #182a30 50%, #152a36 58%, #222628 70%, #222628 74%, #152833 80%, #162a33 100%);
`

const StartButton = styled(IconButton)`
    width: 55px;
    height: 50px;
`

const TaskSearch = styled.div`
    display: flex;
    align-items: center;
    gap: 12px;
    width: 275px;
    height: 40px;
    margin: 0 3px;
    padding-left: 14px;
    border: 1px solid #4a5a61;
    border-radius: 20px;
    background-color: #36474f;
`

const TaskInput = styled.input`
    width: 180px;
    font-size: 17px;
    outline: none;

    &::placeholder {
        color: #ced4d7;
        opacity: 1;
    }
`

const AppButton = styled.button`
    position: relative;
    display: flex;
    align-items: center;
    justify-content: center;
    width: 51px;
    height: 50px;
    margin: 0 2px;
    border-radius: 5px;
    border: 1px solid ${props => props.$active ? "#3c4144" : "transparent"};
    background-color: ${props => props.$active ? "#2d3235" : "transparent"};
`

const Badge = styled.span`
    position: absolute;
    top: 2px;
    right: 1px;
    width: 26px;
    height: 20px;
    border-radius: 10px;
    background-color: #4cc2ff;
    color: #0b1a22;
    font-size: 14px;
    line-height: 20px;
`

const AppTag = styled.span`
    position: absolute;
    right: 9px;
    bottom: 9px;
    padding: 0 1px;
    border-radius: 2px;
    background-color: ${props => props.$plain ? "transparent" : "#0c0c0c"};
    font-size: 8px;
    font-weight: 700;
    line-height: 9px;
`

const Indicator = styled.span`
    position: absolute;
    bottom: 0;
    left: 50%;
    width: ${props => props.$active ? 20 : 8}px;
    height: 4px;
    border-radius: 2px;
    background-color: ${props => props.$active ? "#4cc2ff" : "#9aa1a5"};
    transform: translateX(-50%);
`

const Tray = styled.div`
    display: flex;
    align-items: center;
    margin-left: auto;
`

const TrayGroup = styled.div`
    display: flex;
    padding-left: 5px;
`

const TrayButton = styled(IconButton)`
    width: ${props => props.$width}px;
    height: 40px;
`

const Clock = styled.div`
    display: flex;
    flex-direction: column;
    width: 117px;
    padding-right: 24px;
    padding-bottom: 4px;
    text-align: right;
    font-size: 15px;
    line-height: 20px;
`
